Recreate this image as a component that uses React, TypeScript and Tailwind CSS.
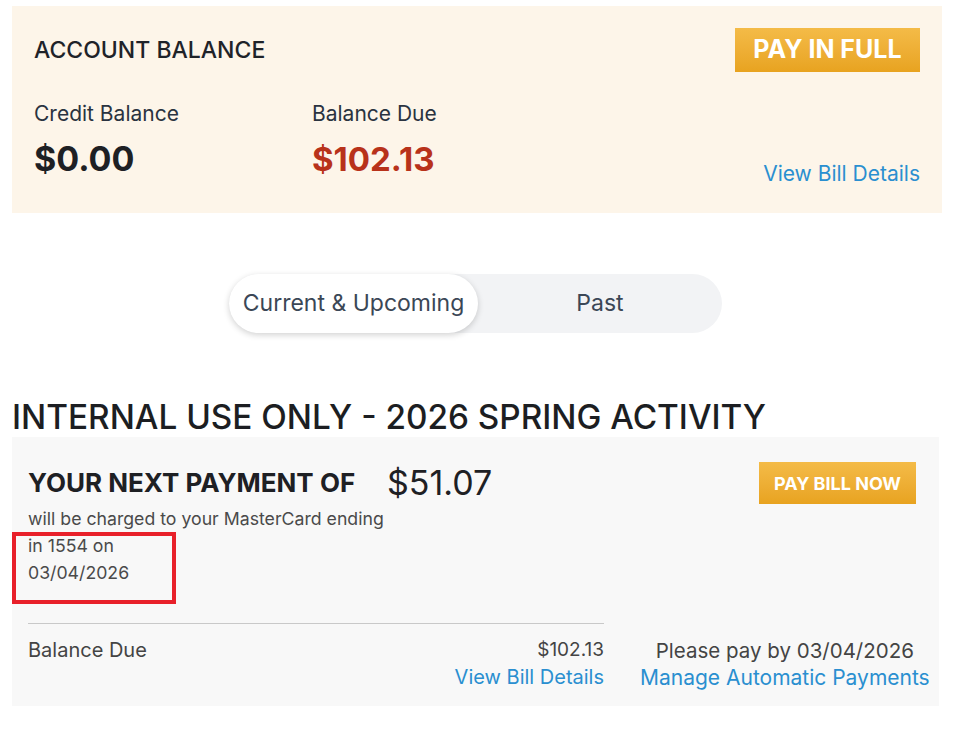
import React from "react";

const font = { fontFamily: "Inter, 'Liberation Sans', Arial, sans-serif" };

function GoldButton({ children, className }: { children: React.ReactNode; className: string }) {
  return (
    <button
      className={`bg-gradient-to-b from-[#f4bb47] to-[#e8a31f] text-white font-bold flex items-center justify-center ${className}`}
    >
      {children}
    </button>
  );
}

export default function App() {
  return (
    <div className="bg-white w-[961px] h-[748px] overflow-hidden" style={font}>
      <div className="pt-[6px] pl-[12px]">
        {/* Account balance summary */}
        <section className="w-[930px] h-[207px] bg-[#fdf5e9] px-[22px] pt-[22px] flex justify-between">
          <div className="flex flex-col">
            <h2 className="text-[23px] leading-[44px] text-[#1f2329] font-medium">ACCOUNT BALANCE</h2>
            <div className="flex mt-[30px]">
              <div className="w-[278px]">
                <div className="text-[21px] leading-[24px] text-[#2a3340]">Credit Balance</div>
                <div className="text-[34px] leading-[40px] font-bold text-[#1e2024] mt-[13px]">$0.00</div>
              </div>
              <div>
                <div className="text-[21px] leading-[24px] text-[#2a3340]">Balance Due</div>
                <div className="text-[33px] leading-[40px] font-bold text-[#b8321a] mt-[13px]">$102.13</div>
              </div>
            </div>
          </div>
          <div className="flex flex-col items-end">
            <GoldButton className="w-[185px] h-[44px] text-[25px]">PAY IN FULL</GoldButton>
            <a className="mt-[88px] text-[21px] leading-[28px] text-[#2a8fd0]">View Bill Details</a>
          </div>
        </section>

        {/* Segmented tabs */}
        <div className="ml-[217px] mt-[61px] w-[493px] h-[59px] rounded-full bg-[#f2f3f5] flex">
          <div className="w-[249px] h-[59px] rounded-full bg-white shadow-[0_2px_6px_rgba(0,0,0,0.18)] flex items-center justify-center text-[23px] text-[#3b4756]">
            Current &amp; Upcoming
          </div>
          <div className="flex-1 flex items-center justify-center text-[23px] text-[#3b4756]">Past</div>
        </div>

        <h1 className="mt-[64px] text-[33.3px] leading-[40px] text-[#1c1e22] font-medium">
          INTERNAL USE ONLY - 2026 SPRING ACTIVITY
        </h1>

        {/* Upcoming payment card */}
        <section className="relative w-[927px] h-[269px] bg-[#f8f8f8] px-[16px] pt-[25px]">
          <div className="flex justify-between">
            <div>
              <div className="flex items-center h-[40px]">
                <span className="text-[26px] font-bold text-[#1e2024] w-[359px]">YOUR NEXT PAYMENT OF</span>
                <span className="text-[34px] text-[#1e2024]">$51.07</span>
              </div>
              <div className="mt-[3px] text-[17.7px] leading-[27px] text-[#4a4a4a] w-[380px]">
                will be charged to your MasterCard ending
                <br />
                in 1554 on
                <br />
                03/04/2026
              </div>
            </div>
            <GoldButton className="w-[157px] h-[42px] text-[18px] mr-[7px]">PAY BILL NOW</GoldButton>
          </div>

          <div className="flex mt-[37px]">
            <div className="w-[576px] shrink-0 border-t border-[#c9c9c9] pt-[13px]">
              <div className="flex justify-between text-[20px] leading-[26px] text-[#444]">
                <span>Balance Due</span>
                <span className="text-[19px]">$102.13</span>
              </div>
              <div className="text-right text-[20px] leading-[28px] text-[#2a8fd0]">View Bill Details</div>
            </div>
            <div className="flex-1 pt-[14px] pl-[36px] flex flex-col items-center whitespace-nowrap text-[20.5px] leading-[27px]">
              <span className="text-[#444]">Please pay by 03/04/2026</span>
              <a className="text-[#2a8fd0] text-[21px]">Manage Automatic Payments</a>
            </div>
          </div>

          <div className="absolute left-0 top-[95px] w-[164px] h-[72px] border-4 border-[#e8202a]" />
        </section>
      </div>
    </div>
  );
}
